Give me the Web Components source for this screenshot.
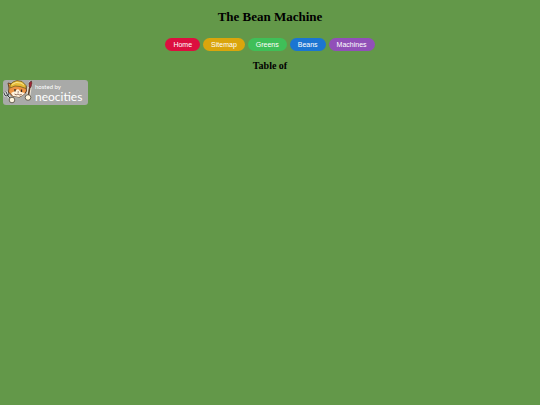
<!DOCTYPE html>
<html lang="en">
<head>
<meta charset="utf-8">
<title>The Bean Machine</title>
<style>
	body {
		margin: 0;
		background: #639849;
		color: #000;
		font-family: "Liberation Serif", serif;
	}
</style>
</head>
<body>
<bean-page>
	<span slot="title">The Bean Machine</span>
	<nav-button slot="nav" color="#dc0f3f">Home</nav-button>
	<nav-button slot="nav" color="#daa50c">Sitemap</nav-button>
	<nav-button slot="nav" color="#3fbf58">Greens</nav-button>
	<nav-button slot="nav" color="#1b75d2">Beans</nav-button>
	<nav-button slot="nav" color="#9150b8">Machines</nav-button>
	<span slot="subtitle">Table of</span>
	<host-badge slot="footer"></host-badge>
</bean-page>

<script>
// The <bean-page> element:

// - Has slots for the title, nav, subtitle and footer
class BeanPage extends HTMLElement {
	constructor() {
		super();
		const shadow = this.attachShadow({mode: 'open'});
		shadow.innerHTML = `
			<style>
				:host {
					display: block;
					padding: 8px 3px;
				}
				h1, h2 {
					margin: 0;
					text-align: center;
				}
				h1 {
					font-size: 13px;
					line-height: 18px;
				}
				h2 {
					font-size: 10px;
					line-height: 12px;
				}
				nav {
					display: flex;
					justify-content: center;
					gap: 3px;
					padding: 12px 0 9px;
				}
				footer {
					display: flex;
					padding-top: 8px;
				}
			</style>
			<header>
				<h1><slot name="title"></slot></h1>
				<nav><slot name="nav"></slot></nav>
			</header>
			<main><h2><slot name="subtitle"></slot></h2></main>
			<footer><slot name="footer"></slot></footer>`;
	}
}
window.customElements.define('bean-page', BeanPage);

// The <nav-button> element:

// - Contains a color attribute
class NavButton extends HTMLElement {
	constructor() {
		super();
		const shadow = this.attachShadow({mode: 'open'});
		shadow.innerHTML = `
			<style>
				:host {
					display: block;
				}
				button {
					display: block;
					border: 0;
					border-radius: 7px;
					padding: 2px 8px;
					background: var(--button-color);
					color: #fff;
					font: 7px/9px "Liberation Sans", sans-serif;
					cursor: pointer;
				}
			</style>
			<button type="button"><slot></slot></button>`;
	}

	connectedCallback() {
		this.style.setProperty('--button-color', this.getAttribute('color'));
	}
}
window.customElements.define('nav-button', NavButton);

// The <host-badge> element, a link with the cat mascot and the host's name
class HostBadge extends HTMLElement {
	constructor() {
		super();
		const shadow = this.attachShadow({mode: 'open'});
		shadow.innerHTML = `
			<style>
				:host {
					display: block;
				}
				a {
					display: flex;
					padding-right: 6px;
					border-radius: 3px;
					background: #a9aaa8;
					color: #fff;
					font-family: Lato, sans-serif;
					text-decoration: none;
				}
				svg {
					display: block;
				}
				.words {
					display: flex;
					flex-direction: column;
					padding-top: 3px;
				}
				.small {
					font-size: 6px;
					line-height: 7px;
				}
				.name {
					font-size: 12px;
					line-height: 14px;
				}
			</style>
			<a href="https://neocities.org/">
				<svg width="32" height="25" viewBox="0 0 32 25" aria-hidden="true">
					<!-- fork -->
					<path d="M4 15l4 4M.8 12.5l1.2 3 2 .5 2-1.5-.5-3.5M2.8 11.5l2 4" fill="none" stroke="#dddfdc" stroke-width="2.2"/>
					<path d="M4 15l4 4M.8 12.5l1.2 3 2 .5 2-1.5-.5-3.5M2.8 11.5l2 4" fill="none" stroke="#34393d"/>
					<!-- brush -->
					<path d="M28 2l-1.5 6-1.2 8" fill="none" stroke="#e9e2d4" stroke-width="4"/>
					<path d="M26.8 7l-1.5 9" stroke="#5d4029" stroke-width="1.6"/>
					<path d="M26 7l0-4 2.3-2 .8 2-1.2 4.5z" fill="#a02335" stroke="#50302c" stroke-width=".7"/>
					<!-- head -->
					<path d="M6 8L5 3l4 1 5-2 6 2 3 2 .5 5-2 3-5 3-7-1-4-4z" fill="#ed9343" stroke="#5c3b20" stroke-width=".9"/>
					<path d="M8 13l4-2 3-2 3 3 4 1-2 2-4 2-6-1z" fill="#fff3df"/>
					<!-- helmet -->
					<path d="M7 5l3-3 4-1.5 5 1 4 4v3l-6-2-5-.5-5 2z" fill="#e6bb37" stroke="#735d1f" stroke-width=".8"/>
					<path d="M9 4.5l4-2 5 .5 3 2" fill="none" stroke="#f9e68c"/>
					<!-- face -->
					<path d="M12 9v2.5M18.5 9.5V12" stroke="#302820" stroke-width="1.3"/>
					<path d="M14.5 12h1.5M11.5 14l1.8.8 1.7-.8 1.7 1 2-.6" fill="none" stroke="#724637" stroke-width=".8"/>
					<!-- paws -->
					<circle cx="9" cy="20" r="2.8" fill="#fff6df" stroke="#4e4638" stroke-width=".8"/>
					<circle cx="25" cy="17.5" r="2.8" fill="#fff6df" stroke="#4e4638" stroke-width=".8"/>
				</svg>
				<span class="words">
					<span class="small">hosted by</span>
					<span class="name">neocities</span>
				</span>
			</a>`;
	}
}
window.customElements.define('host-badge', HostBadge);
</script>
</body>
</html>
